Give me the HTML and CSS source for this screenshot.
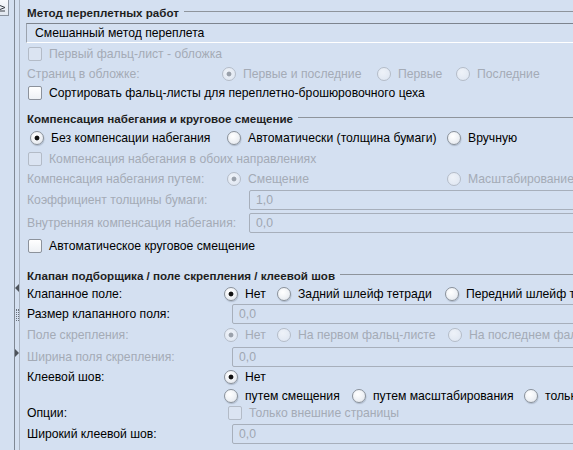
FILE: index.html
```html
<!DOCTYPE html>
<html lang="ru">
<head>
<meta charset="utf-8">
<title>Метод переплетных работ</title>
<link rel="stylesheet" href="styles.css">
</head>
<body>
<div class="app">
  <div class="side">
    <div class="side-btn">
      <svg width="8" height="15" viewBox="0 0 8 15"><path d="M0 5.5 L5 7.5 L0 9.5 M0 11 L5 11" fill="none" stroke="#3a3f46" stroke-width="1"/></svg>
    </div>
  </div>
  <div class="splitter">
    <span class="tri-l"></span>
    <span class="grip"></span>
    <span class="tri-r"></span>
  </div>
  <div class="main">
    <!-- Section 1 -->
    <div class="legend"><span>Метод переплетных работ</span></div>
    <div class="combo">Смешанный метод переплета</div>
    <div class="row h21"><span class="check dis">Первый фальц-лист - обложка</span></div>
    <div class="row h19 grid r-cover dis">
      <span>Страниц в обложке:</span>
      <span class="radio on">Первые и последние</span>
      <span class="radio">Первые</span>
      <span class="radio">Последние</span>
    </div>
    <div class="row h19"><span class="check">Сортировать фальц-листы для переплетно-брошюровочного цеха</span></div>

    <!-- Section 2 -->
    <div class="legend s2"><span>Компенсация набегания и круговое смещение</span></div>
    <div class="row h21 grid r-comp">
      <span class="radio on">Без компенсации набегания</span>
      <span class="radio">Автоматически (толщина бумаги)</span>
      <span class="radio">Вручную</span>
    </div>
    <div class="row h21"><span class="check dis">Компенсация набегания в обоих направлениях</span></div>
    <div class="row h20 grid r-comp dis">
      <span>Компенсация набегания путем:</span>
      <span class="radio on">Смещение</span>
      <span class="radio">Масштабирование</span>
    </div>
    <div class="row h22 grid r-tb2 dis">
      <span>Коэффициент толщины бумаги:</span>
      <span class="tb">1,0</span>
    </div>
    <div class="row h23 grid r-tb2 dis">
      <span>Внутренняя компенсация набегания:</span>
      <span class="tb">0,0</span>
    </div>
    <div class="row h23"><span class="check">Автоматическое круговое смещение</span></div>

    <!-- Section 3 -->
    <div class="legend s3"><span>Клапан подборщика / поле скрепления / клеевой шов</span></div>
    <div class="row h19 grid r-flap">
      <span>Клапанное поле:</span>
      <span class="radio on">Нет</span>
      <span class="radio">Задний шлейф тетради</span>
      <span class="radio">Передний шлейф тетради</span>
    </div>
    <div class="row h21 grid r-tb3">
      <span>Размер клапанного поля:</span>
      <span class="tb dis">0,0</span>
    </div>
    <div class="row h22 grid r-bind dis">
      <span>Поле скрепления:</span>
      <span class="radio on">Нет</span>
      <span class="radio">На первом фальц-листе</span>
      <span class="radio">На последнем фальц-листе</span>
    </div>
    <div class="row h21 grid r-tb3 dis">
      <span>Ширина поля скрепления:</span>
      <span class="tb">0,0</span>
    </div>
    <div class="row h20 grid r-glue1">
      <span>Клеевой шов:</span>
      <span class="radio on">Нет</span>
    </div>
    <div class="row h17 grid r-glue2">
      <span></span>
      <span class="radio">путем смещения</span>
      <span class="radio">путем масштабирования</span>
      <span class="radio">только внешние страницы</span>
    </div>
    <div class="row h18 grid r-opt">
      <span>Опции:</span>
      <span class="check nopad dis">Только внешние страницы</span>
    </div>
    <div class="row h23 grid r-tb3">
      <span>Широкий клеевой шов:</span>
      <span class="tb dis">0,0</span>
    </div>
  </div>
</div>
</body>
</html>
```

FILE: styles.css
```css
* { box-sizing: border-box; }

html, body {
  margin: 0;
  height: 100%;
  overflow: hidden;
}

body {
  background: #d4e0f1;
  font-family: "Liberation Sans", Arial, sans-serif;
  font-size: 12.2px;
  color: #000;
}

.app {
  display: flex;
  height: 450px;
}

/* left strip */
.side {
  flex: none;
  width: 15px;
  border-right: 1px solid #7f8894;
}

.side-btn {
  width: 9px;
  height: 16px;
  background: linear-gradient(#f8fafd, #e1e7f0);
  border-right: 1px solid #8a939f;
  border-bottom: 1px solid #8a939f;
  overflow: hidden;
}

.side-btn svg { display: block; }

/* splitter */
.splitter {
  flex: none;
  position: relative;
  width: 5px;
  border-right: 1px solid #a9b3c1;
}

.tri-l {
  position: absolute;
  left: 0;
  top: 284px;
  width: 0;
  height: 0;
  border-right: 4px solid #4d535b;
  border-top: 4px solid transparent;
  border-bottom: 4px solid transparent;
}

.tri-r {
  position: absolute;
  left: 0;
  top: 349px;
  width: 0;
  height: 0;
  border-left: 4px solid #4d535b;
  border-top: 4px solid transparent;
  border-bottom: 4px solid transparent;
}

.grip {
  position: absolute;
  left: 1px;
  top: 309px;
  width: 3px;
  height: 12px;
  border-left: 1px dotted #6b727c;
  border-right: 1px dotted #6b727c;
}

/* main content */
.main {
  flex: none;
  width: 700px;
  padding-left: 7px;
  padding-top: 3px;
}

.legend {
  display: flex;
  align-items: center;
  height: 18px;
  font-weight: bold;
  font-size: 11.6px;
  color: #1e1e1e;
  white-space: nowrap;
}

.legend::after {
  content: "";
  flex: 1;
  margin-left: 5px;
  margin-top: -1px;
  border-top: 1px solid #8e949c;
}

.legend.s2 { margin-top: 7px; }
.legend.s3 { margin-top: 9px; }

.combo {
  height: 20px;
  margin-top: 2px;
  margin-left: -1px;
  padding-left: 8px;
  display: flex;
  align-items: center;
  border-top: 1px solid #7d848e;
  border-left: 1px solid #9ba3ae;
  border-bottom: 1px solid #ffffff;
}

.row {
  display: flex;
  align-items: center;
  white-space: nowrap;
}

.grid {
  display: grid;
  align-items: center;
}

.h17 { height: 17px; }
.h18 { height: 18px; }
.h19 { height: 19px; }
.h20 { height: 20px; }
.h21 { height: 21px; }
.h22 { height: 22px; }
.h23 { height: 23px; }

.r-cover { grid-template-columns: 192px 155px 79px auto; }
.r-comp  { grid-template-columns: 197px 220px auto; }
.r-tb2   { grid-template-columns: 222px 1fr; }
.r-tb3   { grid-template-columns: 205px 1fr; }
.r-flap  { grid-template-columns: 194px 53px 168px auto; }
.r-bind  { grid-template-columns: 194px 53px 171px auto; }
.r-glue1 { grid-template-columns: 194px auto; }
.r-glue2 { grid-template-columns: 194px 128px 172px auto; }
.r-opt   { grid-template-columns: 201px auto; }

.dis { color: #a4abb6; }

/* radio buttons */
.radio {
  display: flex;
  align-items: center;
  padding-left: 3px;
  white-space: nowrap;
}

.radio::before {
  content: "";
  flex: none;
  width: 12px;
  height: 12px;
  margin-right: 7px;
  border-radius: 50%;
  border: 1px solid #8a919a;
  background: radial-gradient(circle at 40% 35%, #ffffff 0, #f3f5f8 40%, #dfe4eb 100%);
  box-shadow: 0.5px 1px 1px rgba(60, 70, 90, 0.25);
}

.radio.on::before {
  background:
    radial-gradient(circle, #111111 0 2px, rgba(17,17,17,0) 2.8px),
    radial-gradient(circle at 40% 35%, #ffffff 0, #f3f5f8 40%, #dfe4eb 100%);
}

.dis .radio::before {
  border-color: #b4bcc8;
  background: radial-gradient(circle at 40% 35%, #eef2f8 0, #dde5f1 100%);
  box-shadow: none;
}

.dis .radio.on::before {
  background:
    radial-gradient(circle, #9aa1ab 0 2px, rgba(154,161,171,0) 2.8px),
    radial-gradient(circle at 40% 35%, #eef2f8 0, #dde5f1 100%);
}

/* check boxes */
.check {
  display: flex;
  align-items: center;
  padding-left: 1px;
  white-space: nowrap;
}

.check.nopad { padding-left: 0; }

.check::before {
  content: "";
  flex: none;
  width: 12px;
  height: 12px;
  margin-right: 7px;
  border: 1px solid #8c929b;
  border-radius: 2px;
  background: linear-gradient(#ffffff, #eef1f5);
}

.check.dis::before {
  border-color: #b3bbc7;
  background: #dbe4f2;
}

/* text boxes */
.tb {
  height: 20px;
  display: flex;
  align-items: center;
  padding-left: 6px;
  border: 1px solid #a7afbb;
  border-radius: 2px;
  color: #9fa7b2;
}
```
